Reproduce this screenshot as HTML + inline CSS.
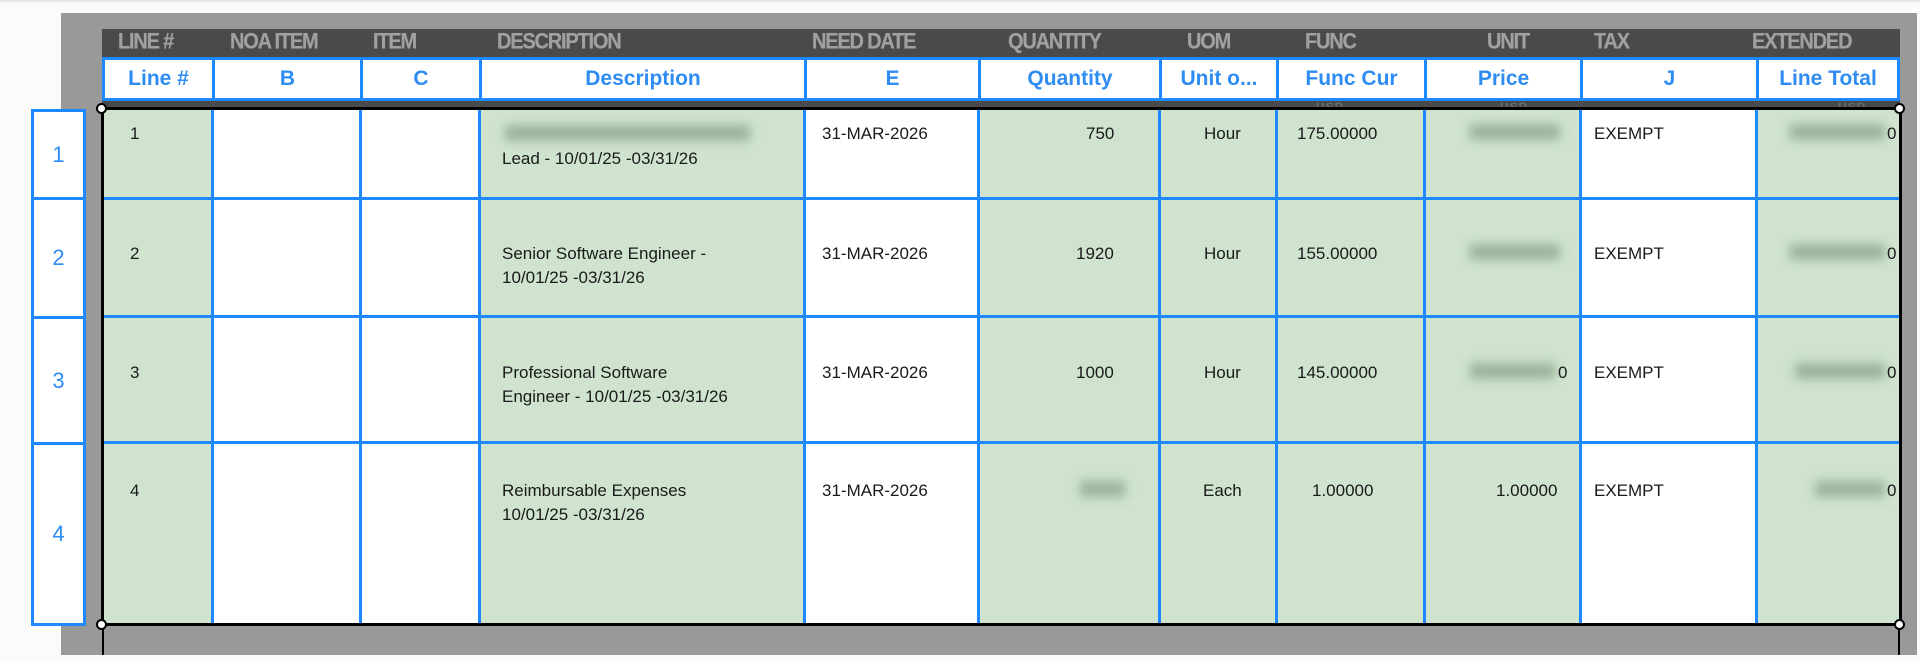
<!DOCTYPE html>
<html><head><meta charset="utf-8"><style>
*{margin:0;padding:0;box-sizing:border-box}
body{width:1920px;height:662px;background:#fbfbfa;position:relative;overflow:hidden;font-family:"Liberation Sans",Arial,sans-serif}
.a{position:absolute}
.dk{color:#a0a0a0;font-weight:bold;font-size:20px;letter-spacing:-1.2px;top:31px;line-height:22px;white-space:nowrap;transform:scaleY(1.1);text-shadow:0 0 0.5px #a0a0a0}
.hb{top:57px;height:44px;border:3px solid #1e88ff;background:#fff;color:#2f8cf2;font-weight:bold;font-size:21px;text-align:center;line-height:37px;white-space:nowrap;overflow:hidden}
.g{background:#cfe3cf}.w{background:#fff}
.vl{width:3px;background:#1e88ff}
.hl{height:3px;background:#1e88ff}
.t{font-size:17px;color:#1a1a1a;line-height:25px;white-space:nowrap}
.bl{background:#9bb39b;filter:blur(5px);height:16px}
.ln{left:31px;width:55px;border:3px solid #1e88ff;background:#fff;color:#2f8cf2;font-size:22px;text-align:center}
.usd{color:#6a6a6a;font-size:12px;top:100px;font-weight:bold;letter-spacing:1px}
</style></head><body>
<div class="a" style="left:0;top:0;width:1920px;height:2px;background:#e6e6e6"></div>
<div class="a" style="left:61px;top:13px;width:1856px;height:642px;background:#999"></div>
<div class="a" style="left:102px;top:29px;width:1798px;height:82px;background:#4a4a4a"></div>
<div class="a dk" style="left:118px">LINE #</div>
<div class="a dk" style="left:230px">NOA ITEM</div>
<div class="a dk" style="left:373px">ITEM</div>
<div class="a dk" style="left:497px">DESCRIPTION</div>
<div class="a dk" style="left:812px">NEED DATE</div>
<div class="a dk" style="left:1008px">QUANTITY</div>
<div class="a dk" style="left:1187px">UOM</div>
<div class="a dk" style="left:1305px">FUNC</div>
<div class="a dk" style="left:1487px">UNIT</div>
<div class="a dk" style="left:1594px">TAX</div>
<div class="a dk" style="left:1752px">EXTENDED</div>
<div class="a usd" style="left:1316px">USD</div>
<div class="a usd" style="left:1500px">USD</div>
<div class="a usd" style="left:1838px">USD</div>
<div class="a hb" style="left:102px;width:113px">Line #</div>
<div class="a hb" style="left:212px;width:151px">B</div>
<div class="a hb" style="left:360px;width:122px">C</div>
<div class="a hb" style="left:479px;width:328px">Description</div>
<div class="a hb" style="left:804px;width:177px">E</div>
<div class="a hb" style="left:978px;width:184px">Quantity</div>
<div class="a hb" style="left:1159px;width:120px">Unit o...</div>
<div class="a hb" style="left:1276px;width:151px">Func Cur</div>
<div class="a hb" style="left:1424px;width:159px">Price</div>
<div class="a hb" style="left:1580px;width:179px">J</div>
<div class="a hb" style="left:1756px;width:144px">Line Total</div>
<div class="a" style="left:102px;top:109px;width:1799px;height:516px;background:#cfe3cf"></div>
<div id="grid"></div>
<script>
var cols=[102,212,360,479,804,978,1159,1276,1424,1580,1756,1900];
var white=[1,2,4,9];
var rows=[111,198,316,442,623];
var h='';
for(var i=0;i<white.length;i++){var k=white[i];h+='<div class="a w" style="left:'+cols[k]+'px;top:110px;width:'+(cols[k+1]-cols[k])+'px;height:514px"></div>';}
for(var i=1;i<11;i++)h+='<div class="a vl" style="left:'+(cols[i]-1)+'px;top:110px;height:514px"></div>';
for(var r=1;r<4;r++)h+='<div class="a hl" style="left:102px;top:'+(rows[r]-1)+'px;width:1798px"></div>';
document.getElementById('grid').innerHTML=h;
</script>
<div class="a" style="left:101px;top:107px;width:1801px;height:519px;border:3px solid #000"></div>
<div class="a" style="left:102px;top:624px;width:2px;height:31px;background:#000"></div>
<div class="a" style="left:1898px;top:624px;width:2px;height:31px;background:#000"></div>
<div class="a" style="left:96px;top:103px;width:11px;height:11px;border-radius:50%;background:#fff;border:2px solid #000"></div>
<div class="a" style="left:1894px;top:103px;width:11px;height:11px;border-radius:50%;background:#fff;border:2px solid #000"></div>
<div class="a" style="left:96px;top:619px;width:11px;height:11px;border-radius:50%;background:#fff;border:2px solid #000"></div>
<div class="a" style="left:1894px;top:619px;width:11px;height:11px;border-radius:50%;background:#fff;border:2px solid #000"></div>
<div class="a ln" style="top:109px;height:91px;line-height:85px">1</div>
<div class="a ln" style="top:197px;height:122px;line-height:116px">2</div>
<div class="a ln" style="top:316px;height:129px;line-height:123px">3</div>
<div class="a ln" style="top:442px;height:184px;line-height:178px">4</div>
<div class="a t" style="left:130px;top:121px">1</div>
<div class="a bl" style="left:505px;top:125px;width:245px"></div>
<div class="a t" style="left:502px;top:146px">Lead - 10/01/25 -03/31/26</div>
<div class="a t" style="left:822px;top:121px">31-MAR-2026</div>
<div class="a t" style="left:1086px;top:121px">750</div>
<div class="a t" style="left:1204px;top:121px">Hour</div>
<div class="a t" style="left:1297px;top:121px">175.00000</div>
<div class="a bl" style="left:1470px;top:124px;width:90px"></div>
<div class="a t" style="left:1594px;top:121px">EXEMPT</div>
<div class="a bl" style="left:1790px;top:124px;width:95px"></div>
<div class="a t" style="left:1887px;top:121px">0</div>
<div class="a t" style="left:130px;top:241px">2</div>
<div class="a t" style="left:502px;top:241px">Senior Software Engineer -</div>
<div class="a t" style="left:502px;top:265px">10/01/25 -03/31/26</div>
<div class="a t" style="left:822px;top:241px">31-MAR-2026</div>
<div class="a t" style="left:1076px;top:241px">1920</div>
<div class="a t" style="left:1204px;top:241px">Hour</div>
<div class="a t" style="left:1297px;top:241px">155.00000</div>
<div class="a bl" style="left:1470px;top:244px;width:90px"></div>
<div class="a t" style="left:1594px;top:241px">EXEMPT</div>
<div class="a bl" style="left:1790px;top:244px;width:95px"></div>
<div class="a t" style="left:1887px;top:241px">0</div>
<div class="a t" style="left:130px;top:360px">3</div>
<div class="a t" style="left:502px;top:360px">Professional Software</div>
<div class="a t" style="left:502px;top:384px">Engineer - 10/01/25 -03/31/26</div>
<div class="a t" style="left:822px;top:360px">31-MAR-2026</div>
<div class="a t" style="left:1076px;top:360px">1000</div>
<div class="a t" style="left:1204px;top:360px">Hour</div>
<div class="a t" style="left:1297px;top:360px">145.00000</div>
<div class="a bl" style="left:1470px;top:363px;width:85px"></div>
<div class="a t" style="left:1558px;top:360px">0</div>
<div class="a t" style="left:1594px;top:360px">EXEMPT</div>
<div class="a bl" style="left:1795px;top:363px;width:90px"></div>
<div class="a t" style="left:1887px;top:360px">0</div>
<div class="a t" style="left:130px;top:478px">4</div>
<div class="a t" style="left:502px;top:478px">Reimbursable Expenses</div>
<div class="a t" style="left:502px;top:502px">10/01/25 -03/31/26</div>
<div class="a t" style="left:822px;top:478px">31-MAR-2026</div>
<div class="a bl" style="left:1080px;top:481px;width:45px"></div>
<div class="a t" style="left:1203px;top:478px">Each</div>
<div class="a t" style="left:1312px;top:478px">1.00000</div>
<div class="a t" style="left:1496px;top:478px">1.00000</div>
<div class="a t" style="left:1594px;top:478px">EXEMPT</div>
<div class="a bl" style="left:1815px;top:481px;width:70px"></div>
<div class="a t" style="left:1887px;top:478px">0</div>
</body></html>
